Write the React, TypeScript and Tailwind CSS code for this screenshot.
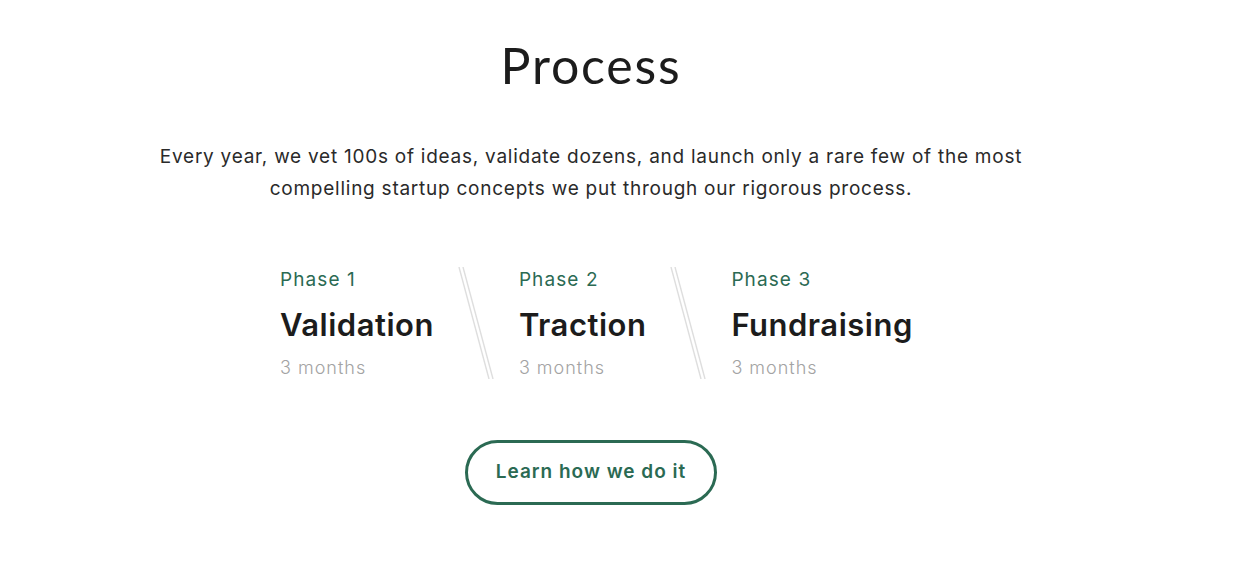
const phases = [
  { label: 'Phase 1', title: 'Validation', time: '3 months' },
  { label: 'Phase 2', title: 'Traction', time: '3 months' },
  { label: 'Phase 3', title: 'Fundraising', time: '3 months' },
];

// Double diagonal rule between phases
const Divider = () => (
  <svg width="36" height="112" viewBox="0 0 36 112" className="ml-[24px] mr-[25px] mt-[1px] shrink-0">
    <line x1="1" y1="0" x2="31" y2="112" stroke="#dedede" strokeWidth="1.4" />
    <line x1="5" y1="0" x2="35" y2="112" stroke="#dedede" strokeWidth="1.4" />
  </svg>
);

export default function App() {
  return (
    <div
      className="w-[1246px] h-[578px] bg-white overflow-hidden"
      style={{ fontFamily: 'Inter, Lato, sans-serif' }}
    >
      <div className="w-[1182px] flex flex-col items-center pt-[33px]">
        <h1
          className="text-[50px] leading-[64px] font-normal text-[#1c1c1c] tracking-[1.8px]"
          style={{ fontFamily: 'Lato, sans-serif' }}
        >
          Process
        </h1>

        <p className="mt-[44px] text-[19px] leading-[32px] tracking-[0.75px] text-[#2a2a2a] text-center w-[890px]">
          Every year, we vet 100s of ideas, validate dozens, and launch only a rare few of the most compelling startup
          concepts we put through our rigorous process.
        </p>

        <div className="mt-[61px] flex items-start w-[1182px] pl-[280px]">
          {phases.map((p, i) => (
            <div key={p.label} className="flex items-start">
              <div className="flex flex-col pt-[2px]">
                <span className="text-[19px] leading-[24px] tracking-[1.1px] text-[#2b6a53]">{p.label}</span>
                <span className="mt-[15px] text-[31px] leading-[36px] tracking-[0.5px] font-semibold text-[#1c1c1c]">
                  {p.title}
                </span>
                <span className="mt-[13px] text-[18px] leading-[24px] tracking-[1px] font-light text-[#a3a3a3]">
                  {p.time}
                </span>
              </div>
              {i < phases.length - 1 && <Divider />}
            </div>
          ))}
        </div>

        <button className="mt-[60px] w-[252px] h-[65px] rounded-full border-[3px] border-[#2b6a53] text-[#2b6a53] text-[19px] tracking-[1px] font-semibold bg-white">
          Learn how we do it
        </button>
      </div>
    </div>
  );
}
